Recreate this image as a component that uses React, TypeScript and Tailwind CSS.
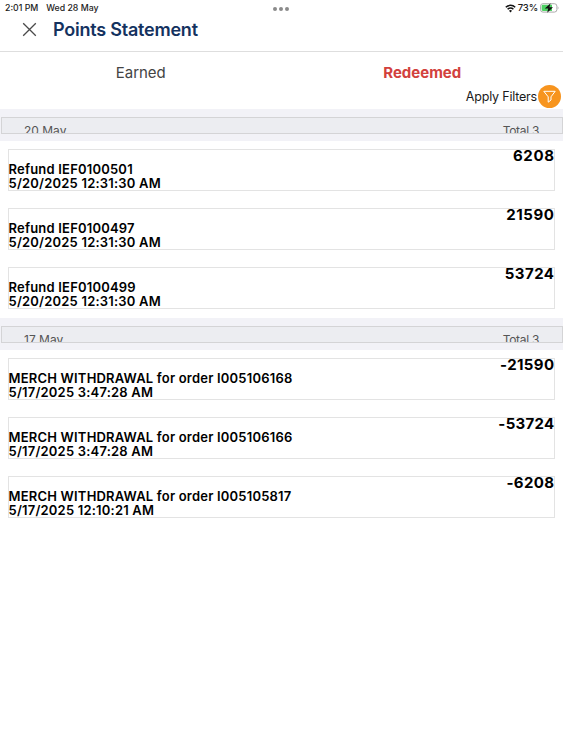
import clsx from "clsx";

type Entry = {
  title: string;
  date: string;
  points: string;
  pointsSpacing: string;
};

type Group = {
  day: string;
  total: string;
  entries: Entry[];
};

const GROUPS: Group[] = [
  {
    day: "20 May",
    total: "Total 3",
    entries: [
      {
        title: "Refund IEF0100501",
        date: "5/20/2025 12:31:30 AM",
        points: "6208",
        pointsSpacing: "tracking-[0.6px]",
      },
      {
        title: "Refund IEF0100497",
        date: "5/20/2025 12:31:30 AM",
        points: "21590",
        pointsSpacing: "tracking-[0.6px]",
      },
      {
        title: "Refund IEF0100499",
        date: "5/20/2025 12:31:30 AM",
        points: "53724",
        pointsSpacing: "tracking-[0.5px]",
      },
    ],
  },
  {
    day: "17 May",
    total: "Total 3",
    entries: [
      {
        title: "MERCH WITHDRAWAL for order I005106168",
        date: "5/17/2025 3:47:28 AM",
        points: "-21590",
        pointsSpacing: "tracking-[0.4px]",
      },
      {
        title: "MERCH WITHDRAWAL for order I005106166",
        date: "5/17/2025 3:47:28 AM",
        points: "-53724",
        pointsSpacing: "tracking-[0.3px]",
      },
      {
        title: "MERCH WITHDRAWAL for order I005105817",
        date: "5/17/2025 12:10:21 AM",
        points: "-6208",
        pointsSpacing: "tracking-[0.4px]",
      },
    ],
  },
];

function WifiIcon() {
  return (
    <svg width="11" height="9" viewBox="0 0 11 9" fill="none" stroke="#111" strokeWidth="1.5">
      <path d="M0.8 3.3a6.7 6.7 0 0 1 9.4 0" />
      <path d="M2.6 5.3a4.1 4.1 0 0 1 5.8 0" />
      <path d="M5.5 8.4 4 6.8a2.1 2.1 0 0 1 3 0Z" fill="#111" stroke="none" />
    </svg>
  );
}

function BatteryIcon() {
  return (
    <svg width="19" height="10" viewBox="0 0 19 10" fill="none">
      <rect x="0.5" y="0.7" width="16.4" height="8.4" rx="2.5" stroke="#a3a3a3" strokeWidth="0.9" />
      <path d="M3 1.8h9v6.2H3A1.4 1.4 0 0 1 1.6 6.6V3.2A1.4 1.4 0 0 1 3 1.8Z" fill="#4fd164" />
      <path d="M17.8 3.5c.9.3.9 2.5 0 2.8Z" fill="#a3a3a3" />
      <path d="M10.6 0.2 4.8 5.6h3.4l-1 4.200 5.800-5.500H9.400Z" fill="#111" />
    </svg>
  );
}

function StatusBar() {
  return (
    <div className="flex h-4 items-center pl-[5px] pr-[4px] text-[8.75px] font-medium text-[#1c1c1c]">
      <span className="pt-px">2:01 PM</span>
      <span className="ml-2 pt-px">Wed 28 May</span>
      <div className="ml-auto flex items-center">
        <WifiIcon />
        <span className="ml-[2px] mr-[2px] text-[9.5px] tracking-[-0.1px]">73%</span>
        <BatteryIcon />
      </div>
      <div className="absolute left-[273px] top-[7px] flex gap-[2px]">
        <i className="size-1 rounded-full bg-[#8b8b8b]" />
        <i className="size-1 rounded-full bg-[#8b8b8b]" />
        <i className="size-1 rounded-full bg-[#8b8b8b]" />
      </div>
    </div>
  );
}

function EntryRow({ entry }: { entry: Entry }) {
  return (
    <li className="flex h-[42px] justify-between border border-[#e3e3e3] text-black">
      <div className="-ml-[0.5px] pt-[13px] text-[13px] font-semibold leading-[13.5px] tracking-[0.2px]">
        <p className="whitespace-nowrap">{entry.title}</p>
        <p className="whitespace-nowrap">{entry.date}</p>
      </div>
      <p
        className={clsx(
          "-mr-[0.5px] -mt-[3px] text-[15px] font-bold leading-[18px]",
          entry.pointsSpacing,
        )}
      >
        {entry.points}
      </p>
    </li>
  );
}

export default function App() {
  return (
    <div className="relative min-h-[750px] w-[563px] overflow-hidden bg-white font-['Inter',sans-serif]">
      <StatusBar />

      <header className="flex h-9 items-center border-b border-[#dedede] pb-2 pl-[22px]">
        <svg width="15" height="15" viewBox="0 0 15 15" stroke="#4a4a4a" strokeWidth="1.3">
          <path d="M1.2 1.2 13.8 13.8M13.8 1.2 1.2 13.8" />
        </svg>
        <h1 className="ml-4 text-[18px] font-semibold tracking-[-0.22px] text-[#14325f]">
          Points Statement
        </h1>
      </header>

      <nav className="grid h-8 grid-cols-2 pt-2 text-center text-[15px] leading-[26px]">
        <button className="text-[#444]">Earned</button>
        <button className="font-bold text-[#d2413d]">Redeemed</button>
      </nav>

      <div className="flex h-[25px] items-center justify-end pr-[2px] text-[12.5px] text-[#1a1a1a]">
        <span className="pt-px tracking-[-0.2px]">Apply Filters</span>
        <span className="ml-px flex size-[23px] items-center justify-center rounded-full bg-[#f7941e]">
          <svg width="13" height="13" viewBox="0 0 13 13" fill="none" stroke="#fff" strokeWidth="1">
            <path d="M0.8 1.3h11.4L8 6.8v3.2L5.2 12.2V6.8Z" strokeLinejoin="round" />
          </svg>
        </span>
      </div>

      {GROUPS.map((group) => (
        <section key={group.day}>
          <div className="h-8 bg-[#f2f2f7] pl-px pt-2">
            <div className="flex h-[17px] justify-between overflow-hidden border border-[#d4d4d6] bg-[#ecedf1] pl-[22px] pr-[23px] pt-1 text-[12px] leading-[18px] text-[#555]">
              <span>{group.day}</span>
              <span className="tracking-[-0.3px]">{group.total}</span>
            </div>
          </div>
          <ul className="flex flex-col gap-[17px] px-2 pb-[9px] pt-2">
            {group.entries.map((entry) => (
              <EntryRow key={entry.title} entry={entry} />
            ))}
          </ul>
        </section>
      ))}
    </div>
  );
}
